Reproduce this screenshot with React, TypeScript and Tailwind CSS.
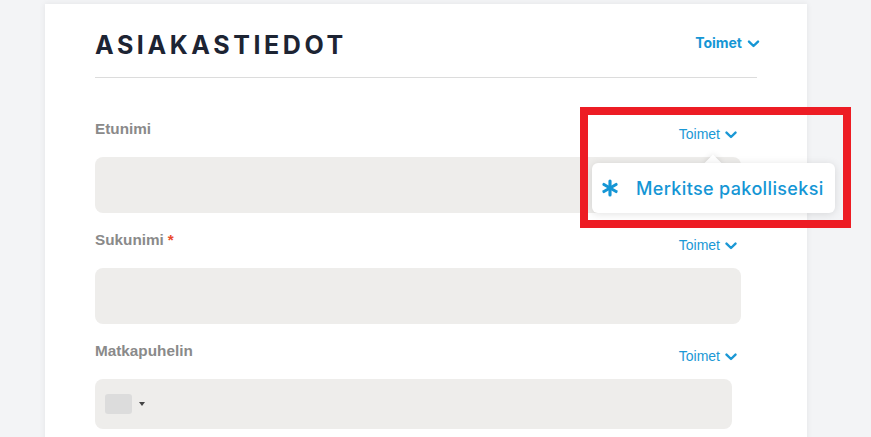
import { Asterisk } from "lucide-react";

const fields = [
  { label: "Etunimi", required: false, height: "h-[56px]", width: "w-[646px]" },
  { label: "Sukunimi", required: true, height: "h-[56px]", width: "w-[646px]" },
  { label: "Matkapuhelin", required: false, height: "h-[50px]", width: "w-[637px]", phone: true },
];

function Chevron({ className }: { className?: string }) {
  return (
    <svg viewBox="0 0 12 8" className={className} fill="none" stroke="currentColor" strokeWidth={2.4} strokeLinecap="round" strokeLinejoin="round">
      <path d="M1.5 1.6 6 6 10.5 1.6" />
    </svg>
  );
}

export default function App() {
  return (
    <div className="relative min-h-screen overflow-hidden bg-[#f3f4f6] pl-[45px] pt-[4px] font-['Liberation_Sans',Arial,sans-serif]">
      <div className="h-[600px] w-[762px] bg-white px-[50px] pt-[29px] shadow-[0_0_6px_rgba(0,0,0,0.07)]">
        {/* otsikko */}
        <div className="flex items-start justify-between border-b border-[#dcdcdc] pb-[19px]">
          <h1 className="font-['Inter',sans-serif] text-[25px] font-bold leading-none tracking-[3.6px] text-[#1d2433]">
            ASIAKASTIEDOT
          </h1>
          <button className="-mr-[3px] flex items-center gap-[5px] font-['Inter',sans-serif] text-[14px] font-bold leading-5 text-[#1596d5]">
            Toimet <Chevron className="mt-[1px] h-[8px] w-[13px]" />
          </button>
        </div>

        <div className="pt-[41px]">
          {fields.map((f) => (
            <div key={f.label} className="mb-[17px]">
              <div className="flex h-[38px] w-[642px] items-start justify-between">
                <label className="text-[15.3px] font-bold leading-5 text-[#8a8a8a]">
                  {f.label}
                  {f.required && <span className="ml-[4px] text-[#ea4a2b]">*</span>}
                </label>
                <button className="mt-[5px] flex items-center gap-[5px] text-[14px] leading-5 text-[#1b98d5]">
                  Toimet <Chevron className="mt-[2px] h-[8px] w-[12px]" />
                </button>
              </div>
              <div className={`${f.height} ${f.width} flex items-center rounded-[8px] bg-[#eeedeb] pl-[10px]`}>
                {f.phone && (
                  <div className="flex items-center gap-[7px]">
                    <div className="h-[20px] w-[27px] rounded-[3px] bg-[#dcdcdc]" />
                    <svg viewBox="0 0 6 4" className="h-[4px] w-[6px] fill-[#444]">
                      <path d="M0 0h6L3 4z" />
                    </svg>
                  </div>
                )}
              </div>
            </div>
          ))}
        </div>
      </div>

      {/* avattu Toimet-valikko */}
      <div className="absolute left-[707px] top-[157px] h-[12px] w-[12px] rotate-45 bg-white shadow-[0_0_6px_rgba(0,0,0,0.12)]" />
      <div className="absolute left-[592px] top-[163px] flex h-[50px] w-[243px] items-center gap-[12px] rounded-[6px] bg-white pl-[4px] shadow-[0_1px_8px_rgba(0,0,0,0.12)]">
        <Asterisk className="h-[28px] w-[28px] text-[#1596d5]" strokeWidth={2.7} />
        <span className="font-['Inter',sans-serif] text-[18px] font-medium tracking-[0.02em] text-[#1596d5]">Merkitse pakolliseksi</span>
      </div>

      {/* korostus */}
      <div className="pointer-events-none absolute left-[580px] top-[107px] h-[121px] w-[271px] border-[8px] border-[#ed1c24]" />
    </div>
  );
}
